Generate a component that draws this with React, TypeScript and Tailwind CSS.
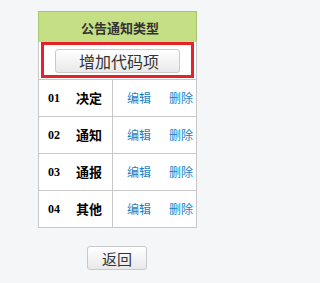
import React from "react";

const rows = [
  { no: "01", name: "决定" },
  { no: "02", name: "通知" },
  { no: "03", name: "通报" },
  { no: "04", name: "其他" },
];

const cjk = "font-['Noto_Sans_CJK_SC',sans-serif]";

export default function App() {
  return (
    <div className={`min-h-screen w-full bg-[#f5f6f8] ${cjk}`}>
      <div className="min-h-[283px] w-[234px] pt-[11px]">
        <div className="ml-[38px] w-[159px]">
          <div className="flex h-[31px] items-center justify-center border border-b-0 border-[#a9c46c] bg-[#c5df84] pl-[5px] text-[13px] font-bold leading-none text-[#333]">
            公告通知类型
          </div>
          <div className="relative flex h-[37px] items-center justify-center border-x border-[#c8c8c8] bg-white">
            <button className="flex h-[24px] w-[125px] items-center justify-center rounded-[3px] border border-[#c9c9c9] bg-gradient-to-b from-white to-[#e9e9e9] pl-[3px] text-[16px] leading-none text-[#333]">
              增加代码项
            </button>
            <div className="pointer-events-none absolute left-[2px] top-0 h-[36px] w-[153px] border-[3px] border-[#e8202a]" />
          </div>
          <div className="border border-t-0 border-[#c8c8c8] bg-white">
            {rows.map((r) => (
              <div key={r.no} className="flex h-[37px] border-t border-[#c8c8c8]">
                <div className="flex w-[74px] items-center border-r border-[#c8c8c8] pl-[9px]">
                  <span className="w-[28px] font-['Liberation_Serif',serif] text-[12px] font-bold text-black">
                    {r.no}
                  </span>
                  <span className="text-[13px] font-bold text-black">{r.name}</span>
                </div>
                <div className="flex flex-1 items-center pl-[14px] text-[12px] text-[#1a7fc3]">
                  <a className="cursor-pointer">编辑</a>
                  <a className="ml-[18px] cursor-pointer">删除</a>
                </div>
              </div>
            ))}
          </div>
        </div>
        <div className="mt-[18px] flex justify-center">
          <button className="flex h-[24px] w-[60px] items-center justify-center rounded-[3px] border border-[#c9c9c9] bg-gradient-to-b from-white to-[#e9e9e9] text-[15px] leading-none text-[#333]">
            返回
          </button>
        </div>
      </div>
    </div>
  );
}
